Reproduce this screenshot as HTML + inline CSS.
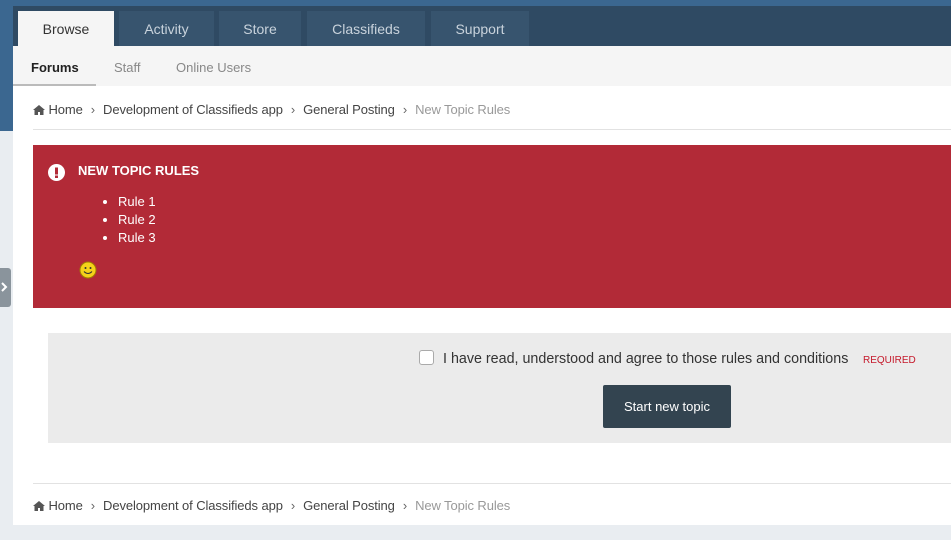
<!DOCTYPE html>
<html><head><meta charset="utf-8"><style>
*{margin:0;padding:0;box-sizing:border-box}
body{width:951px;height:540px;overflow:hidden;background:#e9edf1;font-family:"Liberation Sans",Arial,sans-serif;position:relative}
.topbg{position:absolute;left:0;top:0;width:951px;height:131px;background:#3b6790}
.wrap{position:absolute;left:13px;top:6px;width:938px;height:519px;background:#fff}
.tabs{height:40px;background:#2f4a63;position:relative}
.tab{position:absolute;top:5px;height:35px;background:#37546e;color:#c9d3dc;font-size:14px;line-height:37px;text-align:center}
.tab.on{background:#f5f5f5;color:#333}
.sub{height:40px;background:#f5f5f5;position:relative;font-size:13px;color:#888}
.sub span{position:absolute;top:0;line-height:43px}
.sub .f{left:18px;color:#222;font-weight:bold;}
.sub .ul{position:absolute;left:0;top:38px;width:83px;height:2px;background:#bbb}
.bc{position:absolute;left:20px;font-size:13px;color:#444;white-space:nowrap;letter-spacing:-0.1px}
.bc .g{color:#999}
.bc .s{color:#666;margin:0 8px;font-size:13px}
.line{position:absolute;left:20px;width:918px;height:1px;background:#e2e2e2}
.red{position:absolute;left:20px;top:139px;width:918px;height:163px;background:#b22a37;color:#fff}
.red h3{position:absolute;left:45px;top:18px;font-size:13px;font-weight:bold}
.red ul{position:absolute;left:85px;top:48px;font-size:13px;line-height:18px;list-style:disc}
.gray{position:absolute;left:35px;top:327px;width:903px;height:110px;background:#ebebeb}
.cb{position:absolute;left:371px;top:17px;width:15px;height:15px;border:1px solid #aaa;border-radius:3px;background:#fff}
.lbl{position:absolute;left:395px;top:18px;font-size:14.3px;color:#333;white-space:nowrap}
.req{position:absolute;left:815px;top:22px;font-size:10px;color:#c5182a}
.btn{position:absolute;left:555px;top:52px;width:128px;height:43px;background:#334450;border-radius:2px;color:#fff;font-size:13px;line-height:43px;text-align:center}
.side{position:absolute;left:0;top:268px;width:11px;height:39px;background:#8a949c;border-radius:0 3px 3px 0}
</style></head><body>
<div class="topbg"></div>
<div class="side"><svg width="11" height="39"><path d="M2 15l4 4-4 4" stroke="#fff" stroke-width="2" fill="none"/></svg></div>
<div class="wrap">
<div class="tabs">
<div class="tab on" style="left:5px;width:96px">Browse</div>
<div class="tab" style="left:106px;width:95px">Activity</div>
<div class="tab" style="left:206px;width:82px">Store</div>
<div class="tab" style="left:294px;width:118px">Classifieds</div>
<div class="tab" style="left:418px;width:98px">Support</div>
</div>
<div class="sub"><span class="f">Forums</span><span style="left:101px">Staff</span><span style="left:163px">Online Users</span><div class="ul"></div></div>
<div class="bc" style="top:96px"><svg width="12" height="10" viewBox="0 0 12 10" style="vertical-align:-1px"><path d="M6 0L0 5h1.5v5h3.5V7h2v3h3.5V5H12z" fill="#555"/></svg> Home<span class="s">›</span>Development of Classifieds app<span class="s">›</span>General Posting<span class="s">›</span><span class="g">New Topic Rules</span></div>
<div class="line" style="top:123px"></div>
<div class="red">
<svg style="position:absolute;left:15px;top:19px" width="17" height="17" viewBox="0 0 17 17"><circle cx="8.5" cy="8.5" r="8.5" fill="#fff"/><rect x="7" y="3.5" width="3" height="7" fill="#b22a37"/><rect x="7" y="11.5" width="3" height="2.5" fill="#b22a37"/></svg>
<h3>NEW TOPIC RULES</h3>
<ul><li>Rule 1</li><li>Rule 2</li><li>Rule 3</li></ul>
<svg style="position:absolute;left:46px;top:116px" width="18" height="18" viewBox="0 0 18 18"><circle cx="9" cy="9" r="8" fill="#f5d21a" stroke="#a08000"/><circle cx="6.5" cy="7" r="1" fill="#333"/><circle cx="11.5" cy="7" r="1" fill="#333"/><path d="M5 10.5q4 4 8 0" stroke="#333" fill="none"/></svg>
</div>
<div class="gray"><div class="cb"></div><div class="lbl">I have read, understood and agree to those rules and conditions</div><div class="req">REQUIRED</div><div class="btn">Start new topic</div></div>
<div class="line" style="top:477px"></div>
<div class="bc" style="top:492px"><svg width="12" height="10" viewBox="0 0 12 10" style="vertical-align:-1px"><path d="M6 0L0 5h1.5v5h3.5V7h2v3h3.5V5H12z" fill="#555"/></svg> Home<span class="s">›</span>Development of Classifieds app<span class="s">›</span>General Posting<span class="s">›</span><span class="g">New Topic Rules</span></div>
</div>
</body></html>
